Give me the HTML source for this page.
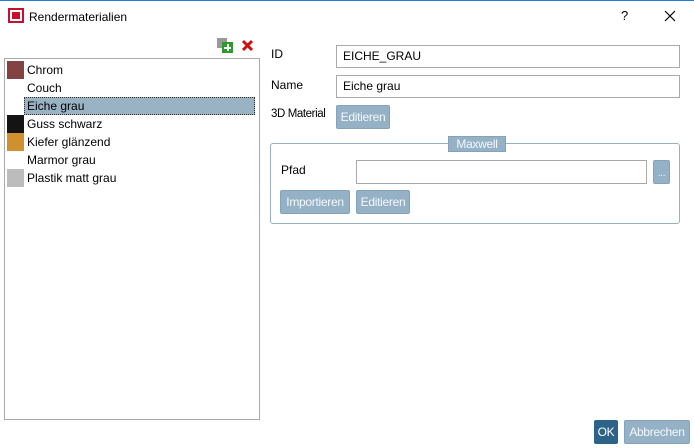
<!DOCTYPE html>
<html><head><style>
body{margin:0;width:694px;height:448px;background:#fff;font-family:"Liberation Sans",sans-serif;font-size:12px;color:#000;position:relative;overflow:hidden}
.a{position:absolute}
.inp{position:absolute;border:1px solid #aaa;background:#fff;box-sizing:border-box;padding-left:6px;line-height:20px}
.btn{position:absolute;background:#95b1c6;border:1px solid #86a2b8;border-radius:2px;color:#f4f8fb;box-sizing:border-box;text-align:center;line-height:22px;letter-spacing:-0.3px}
.it{position:absolute;left:27px;height:18px;line-height:18px}
.sw{position:absolute;left:7px;width:17px;height:18px}
</style></head><body>
<div class="a" style="left:0;top:0;width:694px;height:1px;background:#2b7bd0"></div>
<div class="a" style="left:8px;top:8px;width:16px;height:15px;background:#c8102e"></div>
<div class="a" style="left:10px;top:10px;width:12px;height:11px;background:#fff"></div>
<div class="a" style="left:12px;top:12px;width:8px;height:7px;background:#c8102e"></div>
<div class="a" style="left:29px;top:10px;font-size:12px">Rendermaterialien</div>
<div class="a" style="left:621px;top:8px;font-size:13px">?</div>
<svg class="a" style="left:664px;top:10px" width="12" height="12"><path d="M1 1L11 11M11 1L1 11" stroke="#000" stroke-width="1.2"/></svg>
<div class="a" style="left:217px;top:38px;width:10px;height:10px;background:#999"></div>
<div class="a" style="left:222px;top:42px;width:11px;height:11px;background:#2e9a2e"></div>
<div class="a" style="left:224px;top:47px;width:7px;height:2px;background:#fff"></div>
<div class="a" style="left:226.5px;top:44px;width:2px;height:7px;background:#fff"></div>
<svg class="a" style="left:241px;top:39px" width="13" height="13"><path d="M2 2L11 11M11 2L2 11" stroke="#d01010" stroke-width="3"/></svg>
<div class="a" style="left:4px;top:58px;width:256px;height:362px;border:1px solid #aaa;box-sizing:border-box"></div>
<div class="sw" style="top:61px;background:#834343"></div><div class="it" style="top:61px">Chrom</div>
<div class="it" style="top:79px">Couch</div>
<div class="a" style="left:24px;top:97px;width:231px;height:18px;background:#9ab3c4;outline:1px dotted #333;outline-offset:-1px"></div>
<div class="it" style="top:97px">Eiche grau</div>
<div class="sw" style="top:115px;background:#141414"></div><div class="it" style="top:115px">Guss schwarz</div>
<div class="sw" style="top:133px;background:#d09030"></div><div class="it" style="top:133px">Kiefer glänzend</div>
<div class="it" style="top:151px">Marmor grau</div>
<div class="sw" style="top:169px;background:#bcbcbc"></div><div class="it" style="top:169px">Plastik matt grau</div>
<div class="a" style="left:271px;top:47px">ID</div>
<div class="inp" style="left:336px;top:45px;width:344px;height:23px">EICHE_GRAU</div>
<div class="a" style="left:271px;top:78px">Name</div>
<div class="inp" style="left:336px;top:75px;width:344px;height:23px">Eiche grau</div>
<div class="a" style="left:271px;top:108px;letter-spacing:-0.4px;font-size:11.5px">3D Material</div>
<div class="btn" style="left:336px;top:105px;width:54px;height:24px">Editieren</div>
<div class="a" style="left:270px;top:143px;width:410px;height:81px;border:1px solid #9ab0c2;border-radius:3px;box-sizing:border-box"></div>
<div class="btn" style="left:448px;top:136px;width:58px;height:16px;line-height:14px;border-radius:0">Maxwell</div>
<div class="a" style="left:281px;top:163px">Pfad</div>
<div class="inp" style="left:356px;top:160px;width:291px;height:24px"></div>
<div class="btn" style="left:653px;top:160px;width:17px;height:24px;line-height:26px;font-size:10px">...</div>
<div class="btn" style="left:280px;top:190px;width:70px;height:24px">Importieren</div>
<div class="btn" style="left:356px;top:190px;width:54px;height:24px">Editieren</div>
<div class="btn" style="left:594px;top:420px;width:24px;height:24px;background:#2e6389;border-color:#2e6389;color:#fff">OK</div>
<div class="btn" style="left:624px;top:420px;width:66px;height:24px">Abbrechen</div>
</body></html>
